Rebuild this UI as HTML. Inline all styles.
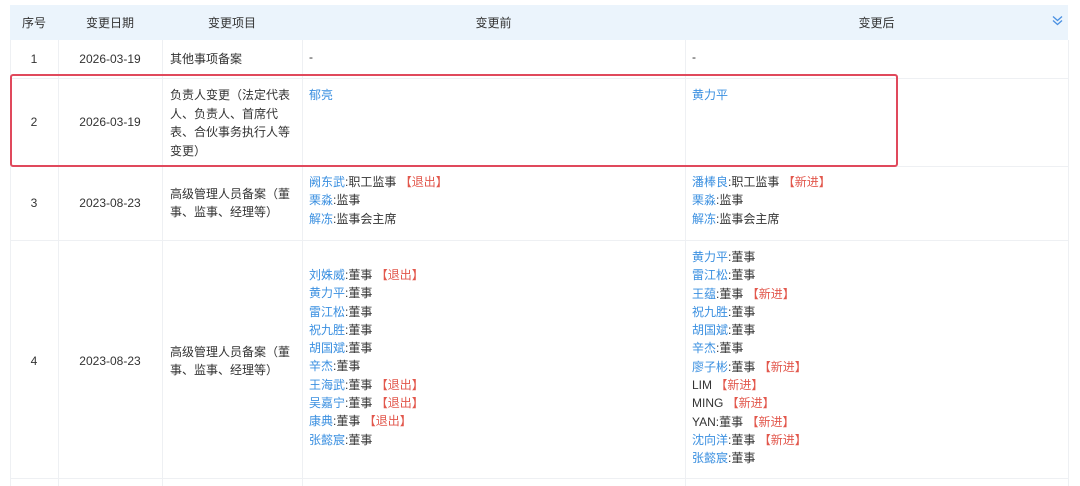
<!DOCTYPE html>
<html><head><meta charset="utf-8"><style>
body{margin:0;background:#fff;font-family:"Liberation Sans","Noto Sans CJK SC",sans-serif;font-size:12px;color:#333;width:1080px;height:486px;overflow:hidden;position:relative}
.c{position:absolute;box-sizing:border-box}
.hd{position:absolute;left:10px;top:5px;width:1058px;height:35px;background:#ebf4fc}
.vl{position:absolute;width:1px;background:#eef0f3}
.hl{position:absolute;left:10px;width:1058px;height:1px;background:#eef0f3}
.t{position:absolute;line-height:18.3px;white-space:nowrap}
.ctr{text-align:center}
a{color:#3a8fe0;text-decoration:none}
.r{color:#e2574c}
</style></head><body>
<div class="hd"></div>
<div class="vl" style="left:10px;top:40px;height:446px"></div>
<div class="vl" style="left:58px;top:40px;height:446px"></div>
<div class="vl" style="left:162px;top:40px;height:446px"></div>
<div class="vl" style="left:302px;top:40px;height:446px"></div>
<div class="vl" style="left:685px;top:40px;height:446px"></div>
<div class="vl" style="left:1068px;top:40px;height:446px"></div>
<div class="hl" style="top:78px"></div>
<div class="hl" style="top:166px"></div>
<div class="hl" style="top:240px"></div>
<div class="hl" style="top:478px"></div>

<div class="t ctr" style="left:10px;width:48px;top:14px">序号</div>
<div class="t ctr" style="left:58px;width:104px;top:14px">变更日期</div>
<div class="t ctr" style="left:162px;width:140px;top:14px">变更项目</div>
<div class="t ctr" style="left:302px;width:383px;top:14px">变更前</div>
<div class="t ctr" style="left:685px;width:383px;top:14px">变更后</div>
<svg style="position:absolute;left:1052px;top:15px" width="11" height="11" viewBox="0 0 11 11"><path d="M1 1.5l4.5 4 4.5-4M1 5.5l4.5 4 4.5-4" fill="none" stroke="#4a90e2" stroke-width="1.3"/></svg>

<div class="t ctr" style="left:10px;width:48px;top:50px">1</div>
<div class="t ctr" style="left:58px;width:104px;top:50px">2026-03-19</div>
<div class="t" style="left:170px;top:50px">其他事项备案</div>
<div class="t" style="left:309px;top:48px">-</div>
<div class="t" style="left:692px;top:48px">-</div>

<div class="t ctr" style="left:10px;width:48px;top:113px">2</div>
<div class="t ctr" style="left:58px;width:104px;top:113px">2026-03-19</div>
<div class="t" style="left:170px;top:86px;line-height:18.5px">负责人变更（法定代表<br>人、负责人、首席代<br>表、合伙事务执行人等<br>变更）</div>
<div class="t" style="left:309px;top:86px"><a>郁亮</a></div>
<div class="t" style="left:692px;top:86px"><a>黄力平</a></div>

<div class="t ctr" style="left:10px;width:48px;top:194px">3</div>
<div class="t ctr" style="left:58px;width:104px;top:194px">2023-08-23</div>
<div class="t" style="left:170px;top:185px">高级管理人员备案（董<br>事、监事、经理等）</div>
<div class="t" style="left:309px;top:173px"><a>阙东武</a>:职工监事 <span class="r">【退出】</span><br><a>栗淼</a>:监事<br><a>解冻</a>:监事会主席</div>
<div class="t" style="left:692px;top:173px"><a>潘棒良</a>:职工监事 <span class="r">【新进】</span><br><a>栗淼</a>:监事<br><a>解冻</a>:监事会主席</div>

<div class="t ctr" style="left:10px;width:48px;top:352px">4</div>
<div class="t ctr" style="left:58px;width:104px;top:352px">2023-08-23</div>
<div class="t" style="left:170px;top:343px">高级管理人员备案（董<br>事、监事、经理等）</div>
<div class="t" style="left:309px;top:266px"><a>刘姝威</a>:董事 <span class="r">【退出】</span><br><a>黄力平</a>:董事<br><a>雷江松</a>:董事<br><a>祝九胜</a>:董事<br><a>胡国斌</a>:董事<br><a>辛杰</a>:董事<br><a>王海武</a>:董事 <span class="r">【退出】</span><br><a>吴嘉宁</a>:董事 <span class="r">【退出】</span><br><a>康典</a>:董事 <span class="r">【退出】</span><br><a>张懿宸</a>:董事</div>
<div class="t" style="left:692px;top:248px"><a>黄力平</a>:董事<br><a>雷江松</a>:董事<br><a>王蕴</a>:董事 <span class="r">【新进】</span><br><a>祝九胜</a>:董事<br><a>胡国斌</a>:董事<br><a>辛杰</a>:董事<br><a>廖子彬</a>:董事 <span class="r">【新进】</span><br>LIM <span class="r">【新进】</span><br>MING <span class="r">【新进】</span><br>YAN:董事 <span class="r">【新进】</span><br><a>沈向洋</a>:董事 <span class="r">【新进】</span><br><a>张懿宸</a>:董事</div>

<div class="c" style="left:10px;top:74px;width:888px;height:93px;border:2.5px solid #e0495c;border-radius:3px"></div>
</body></html>
